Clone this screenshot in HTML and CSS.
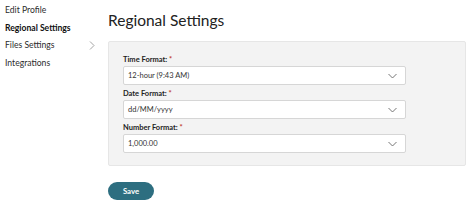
FILE: index.html
```html
<!DOCTYPE html>
<html>
<head>
<meta charset="utf-8">
<link rel="stylesheet" href="styles.css">
</head>
<body>
<div class="page">
  <nav class="sidebar">
    <div class="nav-item">Edit Profile</div>
    <div class="nav-item active">Regional Settings</div>
    <div class="nav-item has-sub">Files Settings
      <svg class="chev-right" width="6" height="9" viewBox="0 0 6 9"><path d="M1 0.5 L5 4.5 L1 8.5" fill="none" stroke="#9a9a9a" stroke-width="0.9"/></svg>
    </div>
    <div class="nav-item">Integrations</div>
  </nav>
  <main class="content">
    <h1 class="title">Regional Settings</h1>
    <section class="panel">
      <div class="field">
        <div class="label">Time Format: <span class="req">*</span></div>
        <div class="select"><span>12-hour (9:43 AM)</span>
          <svg class="chev" width="9" height="6" viewBox="0 0 9 6"><path d="M0.5 1 L4.5 5 L8.5 1" fill="none" stroke="#666" stroke-width="0.9"/></svg>
        </div>
      </div>
      <div class="field">
        <div class="label">Date Format: <span class="req">*</span></div>
        <div class="select"><span>dd/MM/yyyy</span>
          <svg class="chev" width="9" height="6" viewBox="0 0 9 6"><path d="M0.5 1 L4.5 5 L8.5 1" fill="none" stroke="#666" stroke-width="0.9"/></svg>
        </div>
      </div>
      <div class="field">
        <div class="label">Number Format: <span class="req">*</span></div>
        <div class="select"><span>1,000.00</span>
          <svg class="chev" width="9" height="6" viewBox="0 0 9 6"><path d="M0.5 1 L4.5 5 L8.5 1" fill="none" stroke="#666" stroke-width="0.9"/></svg>
        </div>
      </div>
    </section>
    <button class="save">Save</button>
  </main>
</div>
</body>
</html>
```
FILE: styles.css
```css
* { box-sizing: border-box; }
html, body { margin: 0; padding: 0; background: #fff; }
body { font-family: Lato, "Liberation Sans", sans-serif; color: #222; width: 474px; height: 216px; overflow: hidden; }
.page { display: flex; }
.sidebar { width: 108px; padding: 5px 0 0 5px; }
.nav-item { position: relative; height: 17.5px; line-height: 11px; font-size: 8.6px; color: #2c2c2c; }
.nav-item.active { font-weight: bold; color: #111; }
.chev-right { position: absolute; left: 84px; top: 1px; }
.content { width: 358px; }
.title { margin: 0; font-weight: normal; font-size: 15.5px; line-height: 20px; padding-top: 10px; height: 41px; color: #222; }
.panel { background: #f3f3f3; border: 1px solid #e6e6e6; border-radius: 2px; padding: 13px 0 12px 14px; display: flex; flex-direction: column; gap: 4px; }
.field { display: flex; flex-direction: column; gap: 1px; }
.label { font-size: 7.5px; font-weight: bold; line-height: 10px; color: #222; }
.req { color: #c0392b; }
.select { width: 283px; height: 19px; background: #fff; border: 1px solid #d6d6d6; border-radius: 2px; display: flex; align-items: center; justify-content: space-between; padding: 0 8px 0 4px; font-size: 7.5px; color: #333; }
.save { margin-top: 16px; width: 46px; height: 18px; border: none; border-radius: 9px; background: #2d6e80; color: #fff; font-family: inherit; font-weight: bold; font-size: 7.8px; padding: 0; }
```
